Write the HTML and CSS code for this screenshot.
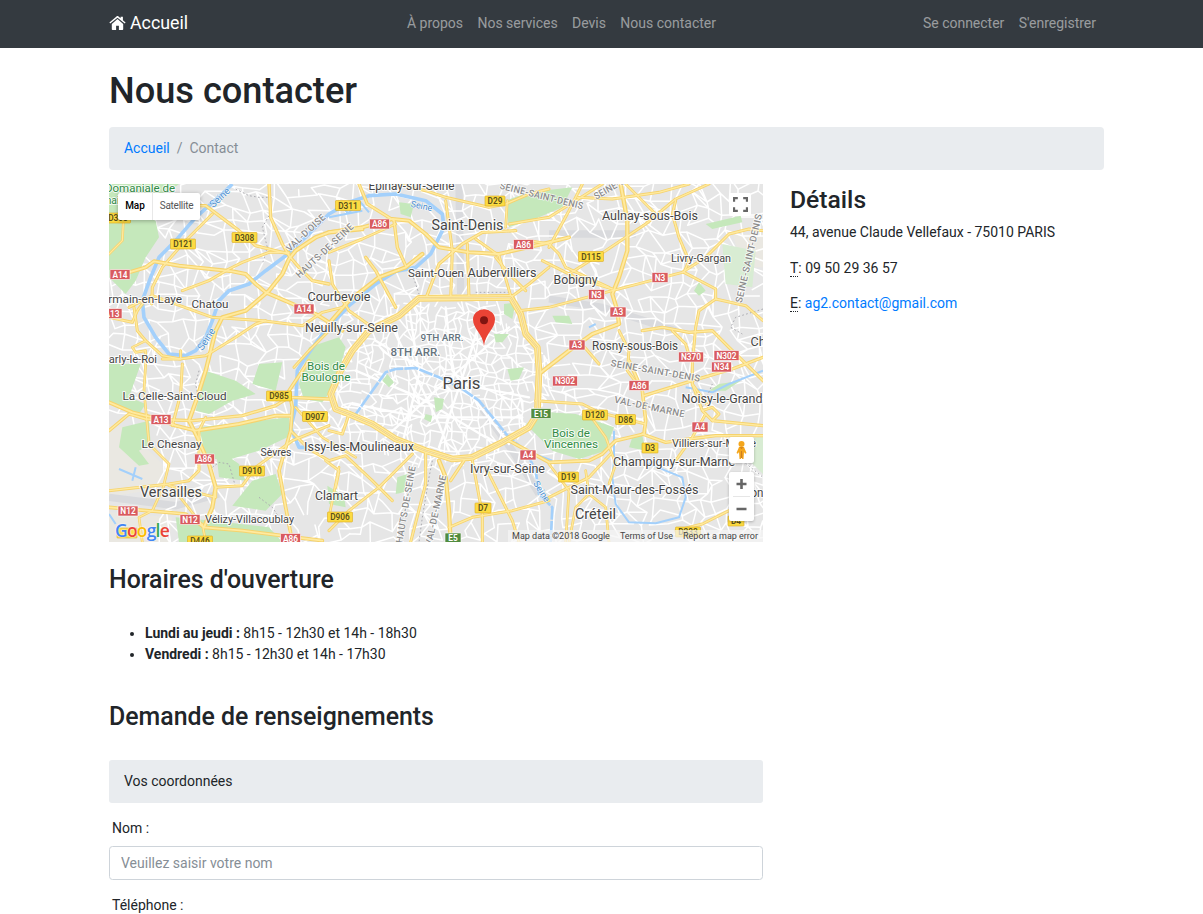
FILE: index.html
```html
<!DOCTYPE html>
<html lang="fr">
<head>
<meta charset="utf-8">
<title>Nous contacter</title>
<link rel="stylesheet" href="styles.css">
</head>
<body>
<nav class="navbar">
  <div class="navbar-inner">
    <a class="brand" href="#"><svg class="home" viewBox="0 0 17 14"><path d="M8.5 3.1 14.2 8v5.2c0 .4-.3.7-.7.7h-3.6V9.8H7.1v4.1H3.5c-.4 0-.7-.3-.7-.7V8z"/><path d="M8.5.1c.4 0 .7.1 1 .4l2.1 1.8V.7h2.3v3.6l2.7 2.3-.8 1L8.5 1.7 1.2 7.6l-.8-1L7.5.5c.3-.3.6-.4 1-.4z"/></svg>Accueil</a>
    <div class="links main-links"><a href="#">À propos</a><a href="#">Nos services</a><a href="#">Devis</a><a href="#">Nous contacter</a></div>
    <div class="links user-links"><a href="#">Se connecter</a><a href="#">S'enregistrer</a></div>
  </div>
</nav>
<div class="container">
  <h1>Nous contacter</h1>
  <div class="breadcrumb"><a href="#">Accueil</a><span class="sep">/</span><span class="current">Contact</span></div>
  <div class="row">
    <main class="content">
      <div class="map">
        <svg class="map-canvas" viewBox="0 0 1962 1074">
          <rect width="1962" height="1074" fill="#e6e6e6"/>
          <g fill="#eae8e2"><path d="M0 720 50 730 160 840 170 910 0 940z"/><path d="M0 985 190 1000 180 1074H0z"/><path d="M1870 150h92v100h-60z"/></g>
          <g fill="none" stroke="#d9dadd" stroke-width="22"><path d="M1050 0 1055 330M1320 150 1580 150M1320 345 1480 370 1700 440M1110 660 1210 800 1290 930M0 940 200 965 330 930"/></g>
          <g id="streets" class="streets"></g>
          <g class="parks">
            <path d="M0 0H210L150 45 30 60 140 110 150 160 110 220 80 290 50 330 0 280z"/>
            <path d="M0 540H95L60 640 110 660 90 690 0 655z"/><path d="M40 730 120 710 125 780 90 800 120 840 90 845 30 790z"/>
            <path d="M270 730 540 700 545 755 450 800 350 830 290 820z"/><path d="M290 560 380 590 440 630 370 650 300 690 260 680z"/>
            <path d="M430 890 500 870 520 930 470 980 370 965z"/><path d="M200 1000 310 1010 480 1030 520 1074H210z"/><path d="M320 790 390 840 410 890 330 880z"/>
            <path d="M450 540 520 535 500 620 430 600z"/><path d="M570 600 600 490 690 460 710 490 680 600 640 655 585 645z"/>
            <path d="M1250 720 1320 685 1400 690 1515 730 1490 800 1410 825 1330 800z"/>
            <path d="M1190 50 1260 25 1390 10 1360 70 1290 100 1200 130z"/><path d="M1790 120 1895 95 1900 115 1810 135z"/>
            <path d="M1570 760 1600 755 1610 800 1560 790zM1770 295 1790 320 1770 335 1755 320z"/>
            <path d="M1185 360 1220 355 1210 405 1185 390zM975 640 1005 645 1000 675 980 685zM1195 555 1245 550 1230 585 1205 590z"/>
            <path d="M870 55 915 60 905 100 875 90zM865 880 895 870 885 925 860 930zM655 905 705 935 710 970 660 960zM1155 450 1200 450 1180 475 1160 475z"/>
            <path d="M1330 395 1380 395 1390 420 1340 415zM1830 600 1895 590 1850 620 1800 620zM820 590 835 570 855 595 840 610zM950 690 970 695 965 715 945 705z"/>
            <path class="pale" d="M1840 180 1940 200 1930 310 1850 300zM1880 790 1962 750V870z"/>
          </g>
          <g class="water">
            <path d="M370 0 340 30 260 100 200 170 150 220 125 280 100 350 105 400 140 460 180 510 230 515 260 500 290 460 310 410 330 350 360 320 420 300 470 260 530 215 600 150 660 90 720 55 780 35 860 30 950 50 1000 90 1005 130 985 170 965 210 920 250 860 262 800 300 720 365 640 450 590 520 565 560 560 670 545 730 570 790 610 790"/>
            <path class="paris" d="M730 705 790 620 830 565 860 555 920 552 990 580 1060 615 1110 650 1200 760 1250 800 1280 860 1290 930 1330 970 1325 1074"/>
            <path class="thin" d="M1515 740 1515 830 1510 880 1520 960 1560 1015 1640 1018 1710 1000 1730 940 1720 880 1670 860 1610 835M1962 560 1860 600 1810 625 1730 610M1250 800 1330 830M660 100 760 80M0 990 20 1020M30 855 100 885M70 890 80 850M700 70 720 90M1440 430 1460 420"/>
            <path class="thin" d="M720 85 755 55 780 85"/>
          </g>
          <g class="borders"><path d="M380 15 420 35 450 40 490 40M480 95 460 130 475 190 460 240M910 270 930 330M1100 325 1200 325M1962 375 1880 400 1865 430 1900 450M270 560 260 600 270 650M310 850 330 835 360 840 380 910M450 940 490 970 510 1000M970 830 960 880 940 1000 930 1074M1780 670 1810 600M1900 830 1962 880"/></g>
          <g id="roads"></g>
          <g class="map-labels" transform="scale(3) translate(-109 -184)" id="labels"></g>
          <g transform="translate(1125 375)"><path d="M0 112C-4 70-33 56-33 23A33 33 0 0 1 33 23C33 56 4 70 0 112z" transform="translate(0 10) scale(1 .9)" fill="#ea4335"/><circle cy="34" r="12" fill="#811411"/></g>
        </svg>
        <div class="map-types"><b>Map</b><span>Satellite</span></div>
        <div class="map-btn full"><svg viewBox="0 0 14 14"><path d="M1 4.5V1h3.5M9.5 1H13v3.5M13 9.5V13H9.5M4.5 13H1V9.5"/></svg></div>
        <div class="map-btn man"><svg viewBox="0 0 12 20"><path fill="#f4a61d" d="M3.5 7h5l2.5 6-1.4.7L8.5 12 8 19H6.5L6 14l-.5 5H4l-.5-7-1.1 1.7L1 13z"/><circle cx="6" cy="4" r="3" fill="#f4a61d"/><path d="M4 7.3h4L6 9zM5.5 11h1l.3 7H5.2z" fill="#ce7d1a"/></svg></div>
        <div class="map-btn zoom"><svg viewBox="0 0 25 49"><path d="M12.5 7v10M7.5 12h10M7.5 37h10" stroke="#666" stroke-width="2.6"/><path d="M4 24.5h17" stroke="#e6e6e6"/></svg></div>
        <div class="google"><span class="b">G</span><span class="r">o</span><span class="y">o</span><span class="b">g</span><span class="g">l</span><span class="r">e</span></div>
        <div class="credits"><span>Map data ©2018 Google</span><span>Terms of Use</span><span>Report a map error</span></div>
      </div>
      <h3 class="hours-title">Horaires d'ouverture</h3>
      <ul>
        <li><strong>Lundi au jeudi :</strong> 8h15 - 12h30 et 14h - 18h30</li>
        <li><strong>Vendredi :</strong> 8h15 - 12h30 et 14h - 17h30</li>
      </ul>
      <h3 class="form-title">Demande de renseignements</h3>
      <form>
        <div class="section">Vos coordonnées</div>
        <label for="nom">Nom :</label>
        <input id="nom" type="text" placeholder="Veuillez saisir votre nom">
        <label class="last">Téléphone :</label>
      </form>
    </main>
    <aside class="details">
      <h3>Détails</h3>
      <p>44, avenue Claude Vellefaux - 75010 PARIS</p>
      <p><abbr title="Téléphone">T</abbr>: 09 50 29 36 57</p>
      <p><abbr title="Email">E</abbr>: <a href="#">ag2.contact@gmail.com</a></p>
    </aside>
  </div>
</div>
<script src="map.js"></script>
</body>
</html>
```
FILE: styles.css
```css
* { box-sizing: border-box; }
body { margin: 0; height: 914px; overflow: hidden; font: 400 14px/21.33px Roboto, sans-serif; letter-spacing: -.01px; color: #212529; background: #fff; }
a { color: #007bff; text-decoration: none; }
.navbar { height: 48px; background: #343a40; }
.navbar-inner { display: flex; align-items: center; width: 995px; height: 47px; margin-left: 109px; }
.brand { display: flex; align-items: center; width: 298px; padding-bottom: 1px; color: #fff; font-size: 17.8px; }
.home { width: 17px; height: 14px; margin-right: 4px; fill: #fff; }
.links { display: flex; gap: 14.4px; }
.links a { color: rgba(255, 255, 255, .5); white-space: nowrap; }
.user-links { margin-left: auto; padding-right: 8px; }
.container { width: 995px; margin-left: 109px; padding-top: 23px; }
h1, h3 { margin: 0; font-weight: 500; line-height: 1.1; }
h1 { font-size: 36.2px; height: 39px; margin-bottom: 17px; }
h3 { font-size: 24.9px; height: 27px; }
.breadcrumb { display: flex; align-items: center; height: 43px; margin-bottom: 14px; padding: 0 15px; background: #e9ecef; border-radius: 4px; }
.sep { padding: 0 7px; color: #868e96; }
.current { color: #868e96; }
.row { display: grid; grid-template-columns: 654px 314px; column-gap: 27px; }
.hours-title { margin-top: 24px; }
ul { margin: 30px 0 37px; padding-left: 36px; }
.section { display: flex; align-items: center; height: 43px; margin: 30px 0 15px; padding: 1px 15px 0; background: #e9ecef; border-radius: 3px; }
label { display: block; margin: 0 0 7px 3px; line-height: 21px; }
.last { margin-bottom: 0; }
input { display: block; width: 100%; height: 34px; margin-bottom: 15px; padding: 0 11px; border: 1px solid #ced4da; border-radius: 3.5px; font: inherit; }
input::placeholder { color: #868e96; opacity: 1; }
.details { padding-top: 2px; }
.details h3 { margin-bottom: 9px; font-size: 24.7px; }
.details p { margin: 0 0 14.2px; }
abbr { text-decoration: none; border-bottom: 1px dotted #212529; display: inline-block; line-height: 15px; }

.map { position: relative; height: 358px; overflow: hidden; background: #e6e6e6; }
.map-canvas { display: block; width: 654px; height: 358px; }
.streets { fill: none; stroke: #fff; stroke-linecap: round; }
.parks { fill: #c5e8bb; }
.parks .pale { fill: #d8ecd3; }
.water { fill: none; stroke: #a3d0fb; stroke-width: 11; stroke-linejoin: round; }
.water .thin { stroke-width: 6; }
.water .paris { stroke-width: 8; stroke-dasharray: 42 4; }
.borders { fill: none; stroke: #aaaab0; stroke-width: 3; stroke-dasharray: 5 7; }
.road-edge, .road-core { fill: none; stroke-linejoin: round; stroke-linecap: round; }
.road-edge { stroke: #f6d36d; }
.road-core { stroke: #ffea9f; }
.map-labels text { font-family: Roboto, sans-serif; text-anchor: middle; paint-order: stroke; stroke: rgba(255, 255, 255, .85); stroke-width: 2px; stroke-linejoin: round; fill: #454545; }
.map-labels .park { fill: #318b45; }
.map-labels .arr { fill: #65737e; font-weight: 500; }
.map-labels .dept { fill: #8b8b8b; font-weight: 500; letter-spacing: .3px; stroke-width: 1.5px; }
.map-labels .river { fill: #4b8fd0; stroke-width: 1px; }
.map-labels .shield { stroke: none; font-size: 8.3px; font-weight: 600; }
.map-types { position: absolute; left: 9px; top: 9px; display: flex; height: 27px; background: #fff; border-radius: 2px; box-shadow: 0 1px 4px rgba(0, 0, 0, .3); font-size: 10px; line-height: 25px; color: #565656; }
.map-types b { width: 35px; text-align: center; color: #000; font-weight: 500; border-right: 1px solid #e8e8e8; }
.map-types span { width: 47px; text-align: center; letter-spacing: -.25px; }
.map-btn { position: absolute; left: 620px; width: 25px; background: #fff; border-radius: 2px; box-shadow: 0 1px 3px rgba(0, 0, 0, .25); display: flex; justify-content: center; align-items: center; }
.full { left: 620px; top: 9px; width: 22px; height: 23px; box-shadow: none; }
.full svg { width: 15px; height: 15px; fill: none; stroke: #666; stroke-width: 2; }
.man { top: 253px; height: 26px; }
.man svg { width: 13px; height: 20px; }
.zoom { top: 288px; height: 49px; }
.zoom svg { width: 25px; height: 49px; }
.google { position: absolute; left: 6px; top: 335px; font: 600 17.5px/22px "Open Sans", sans-serif; letter-spacing: -.8px; text-shadow: 0 0 1px #fff, 0 0 2px #fff; }
.google .b { color: #4285f4; } .google .r { color: #ea4335; } .google .y { color: #fbbc05; } .google .g { color: #34a853; }
.credits { position: absolute; right: 0; bottom: 0; display: flex; gap: 10px; height: 12px; padding: 0 5px 0 4px; background: rgba(245, 245, 245, .7); color: #444; font-size: 9px; line-height: 12px; white-space: nowrap; }
```
FILE: map.js
```js
(function () {
  var ns = 'http://www.w3.org/2000/svg';
  function add(parent, name, attrs, text) {
    var el = document.createElementNS(ns, name);
    for (var k in attrs) el.setAttribute(k, attrs[k]);
    if (text) el.textContent = text;
    parent.appendChild(el);
    return el;
  }

  // Minor streets: an irregular mesh, denser in the city centre
  var seed = 17;
  function rnd() { seed = (seed * 16807) % 2147483647; return seed / 2147483647; }
  function mesh(x0, y0, x1, y1, step, keep, inside) {
    var pts = [], d = '';
    for (var y = y0, r = 0; y <= y1; y += step, r++) {
      pts[r] = [];
      for (var x = x0; x <= x1; x += step) pts[r].push([x + (rnd() - .5) * step * .95, y + (rnd() - .5) * step * .95]);
    }
    function seg(a, b) {
      if (b && inside(a[0], a[1]) && rnd() < keep) d += 'M' + a[0].toFixed(0) + ' ' + a[1].toFixed(0) + 'L' + b[0].toFixed(0) + ' ' + b[1].toFixed(0);
    }
    for (var i = 0; i < pts.length; i++) for (var j = 0; j < pts[i].length; j++) {
      seg(pts[i][j], pts[i][j + 1]);
      if (pts[i + 1]) { seg(pts[i][j], pts[i + 1][j]); if (rnd() < .2) seg(pts[i][j], pts[i + 1][j + 1]); }
    }
    return d;
  }
  function paris(x, y) { return Math.pow((x - 985) / 330, 2) + Math.pow((y - 590) / 245, 2) < 1; }
  function airfield(x, y) { return x < 150 && y > 720; }
  var streets = document.getElementById('streets');
  add(streets, 'path', { d: mesh(0, 0, 1990, 1100, 38, .8, function (x, y) { return !paris(x, y) && !airfield(x, y); }), 'stroke-width': 4.5 });
  add(streets, 'path', { d: mesh(650, 340, 1340, 860, 24, .85, paris), 'stroke-width': 4.5 });
  add(streets, 'path', { d: 'M740 560 930 640 1130 760M800 470 1000 590 1260 640M850 430 990 720 1020 800M1125 370 1080 520 990 790M830 760 980 620 1200 430M730 660 940 700 1240 700M900 370 930 570 880 780M1010 370 1030 560 1200 780', 'stroke-width': 7 });

  // Main roads: width, then the points
  var roads = [
    [12, '60 265 110 250 135 232 210 245 370 262 410 270 440 300 470 325 540 355 620 390 700 440'],
    [10, '480 0 485 100 520 180 540 215 570 250 610 290 660 300'], [10, '270 65 290 65 390 140 440 185 540 210'],
    [9, '310 90 220 180 160 250 130 310 128 360'], [9, '220 320 300 290 360 255 400 235 480 205 540 205'],
    [9, '60 370 130 335 310 400 460 410 580 425 640 385 700 370'],
    [13, '760 135 660 145 620 160 560 200 540 225 520 270 480 320 410 380 340 400 320 440 310 480 290 560 265 640 240 710 265 760 300 840 320 910 310 970 285 1030'],
    [9, '160 525 210 525 290 515 380 460 440 420 470 410'], [9, '0 400 70 415 85 380 100 360'], [9, '75 370 85 440 110 470 160 515 215 525 215 500'],
    [8, '45 80 40 170 0 210'], [9, '660 440 600 500 555 550'], [8, '110 470 70 490 80 505 110 500 110 540 105 620 120 780 180 840 165 900'],
    [12, '660 145 760 130 850 105 900 110 950 150 990 190 1080 205 1170 210 1300 180 1380 160'],
    [20, '1205 340 930 343 870 395 780 440 730 500 695 560 665 630 680 675 720 690 790 720 860 765 950 800 1030 825 1090 820 1180 775 1260 730 1285 690 1290 560 1285 490 1250 450 1235 390 1205 340'],
    [10, '750 0 775 60 855 110 865 190 890 245'], [9, '860 0 950 20 1010 40 1140 70 1190 60 1260 30 1320 15'],
    [9, '1010 50 1030 200 1025 345'], [9, '1075 180 1080 340'], [10, '1220 140 1120 145 1060 180 990 240 950 345'],
    [9, '1100 165 1170 215 1205 335'], [9, '1160 220 1200 270 1250 320'], [9, '660 205 760 165 860 120'], [10, '770 220 800 260 860 370'],
    [13, '650 430 720 350 810 280 890 250 940 210'], [9, '1200 120 1320 100 1400 50 1480 0'], [8, '1195 50 1190 130'],
    [9, '1320 250 1260 300 1205 340'], [9, '1230 380 1320 370 1510 320 1720 265 1790 220 1860 150 1920 135 1962 140'],
    [9, '660 230 670 300 720 380 790 430'],
    [13, '1535 0 1555 110 1555 200 1530 280 1510 330 1525 380 1530 420 1450 450 1380 500 1290 570'],
    [9, '1405 40 1510 45 1650 25 1740 0'], [9, '1420 0 1380 80 1320 190'], [9, '1800 0 1700 45 1610 120 1490 200 1380 270'],
    [8, '1550 0 1640 90'], [9, '1700 50 1690 90 1710 160 1740 230 1725 265'],
    [9, '1260 170 1320 180 1350 210 1370 250 1500 310'], [9, '1300 230 1400 280 1510 315'],
    [9, '1725 265 1820 315 1820 345 1770 380 1760 430 1750 540 1750 600 1800 670'], [9, '1820 345 1910 365 1962 410'],
    [10, '1600 440 1660 430 1740 445 1810 440 1860 490 1962 590'], [9, '1530 440 1560 500 1555 560 1600 620'],
    [9, '1690 440 1730 480 1745 530'], [9, '1410 470 1470 540'],
    [12, '0 655 70 685 150 705 200 725 260 740 390 720 500 695 545 695'], [10, '0 740 60 690 110 705 250 710 400 695 500 665 540 640 660 645'],
    [9, '220 540 215 630 190 725'], [9, '0 920 180 900 240 890 270 860 270 740 290 700'], [9, '320 910 400 905 440 850 550 770 660 725'],
    [9, '180 905 320 940 320 910'], [11, '0 970 230 990 285 1030 400 1040 640 1070'], [8, '190 910 285 1030'],
    [11, '600 530 540 620 550 670 545 740 510 860 530 970 550 1074'], [9, '545 740 600 795 660 830 710 815 790 890 850 950'],
    [8, '165 905 130 980 90 1000 100 1074'], [8, '280 1020 290 1074'], [8, '560 670 640 760 740 820'],
    [9, '950 800 950 900 905 1074'], [13, '990 830 1010 880 1020 980 1025 1074'], [10, '1065 830 1025 890'],
    [9, '1090 830 1120 990 1120 1074'], [9, '1130 850 1210 1010 1230 1074'], [9, '1020 1030 1090 1000 1210 980 1320 950'],
    [9, '910 810 810 910 720 980 660 1040'], [9, '660 740 700 750 720 690'], [11, '1200 770 1320 835 1440 830 1480 810 1520 770 1605 750 1610 710 1600 620 1560 530'],
    [9, '1280 650 1420 660 1470 685 1610 720'], [10, '1605 635 1750 590 1870 555 1962 520'], [10, '1600 750 1670 775 1740 765 1820 755 1962 755'],
    [9, '1750 600 1780 680 1810 710 1830 690 1810 670 1780 680'], [10, '1810 710 1962 725'], [9, '1790 690 1750 760 1700 830'],
    [9, '1505 810 1440 880 1320 940'], [8, '1430 860 1440 930 1490 970 1500 1074'], [8, '1320 840 1380 920 1370 1074'],
    [8, '1440 930 1400 970 1380 1074'], [9, '1700 1040 1780 1020 1860 980 1930 1000'], [8, '1440 690 1490 760 1520 840 1500 900'],
    [8, '690 850 660 1000'], [9, '650 830 690 860 680 910']
  ];
  var layer = document.getElementById('roads');
  ['road-edge', 'road-core'].forEach(function (cls, n) {
    roads.forEach(function (r) { add(layer, 'polyline', { points: r[1], 'class': cls, 'stroke-width': n ? (r[0] > 15 ? 14 : r[0] * .45) : r[0] }); });
  });
  // Median of the ring road
  add(layer, 'polyline', { points: roads[14][1], fill: 'none', stroke: '#f6d36d', 'stroke-width': 6 });
  add(layer, 'polyline', { points: roads[14][1], fill: 'none', stroke: '#eeeae0', 'stroke-width': 2 });

  var labels = document.getElementById('labels');
  // text, centre x, baseline, drawn width, size, class, rotation
  [
    ['Domaniale de', 140, 192, 70, 11.5, 'park'], ['rmain', 112, 204, 26, 11.5, 'park'], ['Epinay-sur-Seine', 411.5, 190, 86, 12],
    ['Saint-Denis', 467.5, 230, 72, 14], ['Aulnay-sous-Bois', 650, 220, 96, 12.5], ['Livry-Gargan', 701, 262, 60, 11],
    ['Bobigny', 575.5, 284, 44, 12.5], ['Saint-Ouen', 436, 277, 56, 11.5], ['Aubervilliers', 502, 277, 69, 12.5],
    ['Courbevoie', 339, 300.5, 63, 12.5], ['Neuilly-sur-Seine', 351.5, 331.5, 93, 12.5], ['Chatou', 210, 308, 37, 11.5],
    ['Germain-en-Laye', 138, 302.5, 88, 11.5], ['Marly-le-Roi', 128, 363, 58, 10.5], ['Rosny-sous-Bois', 635, 349.5, 86, 12],
    ['Chelles', 771, 346, 41, 12.5], ['9TH ARR.', 442, 341, 43, 9.5, 'arr'], ['8TH ARR.', 415.5, 356, 50, 11, 'arr'],
    ['Paris', 461.5, 388.5, 38, 17], ['Bois de', 326, 370, 38, 11, 'park'], ['Boulogne', 326, 381, 49, 11, 'park'],
    ['La Celle-Saint-Cloud', 174.5, 400, 104, 11.5], ['Le Chesnay', 171.5, 448, 60, 11.5], ['Versailles', 171, 496.5, 62, 14],
    ['Vélizy-Villacoublay', 249.5, 522.5, 89, 11], ['Sèvres', 276, 456, 31, 10.5], ['Issy-les-Moulineaux', 359, 451, 110, 12.5],
    ['Clamart', 336.5, 500, 43, 12.5], ['Ivry-sur-Seine', 507.5, 473, 75, 12.5], ['Bois de', 571, 437, 38, 11, 'park'],
    ['Vincennes', 571, 448, 54, 11, 'park'], ['Noisy-le-Grand', 722, 403, 81, 12.5], ['Villiers-sur-Marne', 714, 447, 84, 10.5],
    ['Champigny-sur-Marne', 674, 466, 122, 12.5], ['Saint-Maur-des-Fossés', 634.5, 493.5, 128, 12.5], ['Créteil', 595.5, 519, 41, 14], ['on', 757, 497, 13, 12],
    ['VAL-D\'OISE', 308, 235, 50, 9.5, 'dept', -43], ['HAUTS-DE-SEINE', 327, 253, 75, 9.5, 'dept', -43],
    ['SEINE-SAINT-DENIS', 541, 199, 86, 9.5, 'dept', 14], ['SEINE-SAINT', 620, 186, 55, 9.5, 'dept', -30],
    ['SEINE-SAINT-DENIS', 752, 259, 91, 9.5, 'dept', -77], ['SEINE-SAINT-DENIS', 655, 374, 91, 9.5, 'dept', 10],
    ['VAL-DE-MARNE', 649, 410, 72, 9.5, 'dept', 12], ['HAUTS-DE-SEINE', 409, 505, 78, 9.5, 'dept', -80],
    ['VAL-DE-MARNE', 439, 511, 72, 9.5, 'dept', -78], ['Seine', 222, 200, 24, 10, 'river', -43],
    ['Seine', 421, 209, 22, 9, 'river', 12], ['Seine', 209, 341, 24, 10, 'river', -57], ['Seine', 539, 493, 23, 9, 'river', 58]
  ].forEach(function (l) {
    var a = { x: l[1], y: l[2], textLength: l[3], lengthAdjust: 'spacingAndGlyphs', 'font-size': l[4], 'class': l[5] || 'town' };
    if (l[6]) a.transform = 'rotate(' + l[6] + ' ' + l[1] + ' ' + l[2] + ')';
    add(labels, 'text', a, l[0]);
  });

  // Road number shields: text, centre x, centre y
  [
    ['D308', 118, 218], ['D311', 348, 205.5], ['D121', 183, 244], ['D308', 244.5, 237.5], ['A14', 120, 274.5], ['A13', 112, 313.5],
    ['A86', 379.5, 224], ['D29', 495, 201], ['A86', 523.5, 244.5], ['A14', 304, 309], ['D115', 591, 256.5], ['N3', 660, 277.5],
    ['N3', 596.5, 294.5], ['A3', 618, 312], ['A3', 577, 345], ['N34', 721.5, 367], ['N370', 691, 357], ['N302', 726.5, 355.5],
    ['N302', 565, 381], ['A86', 639, 385.5], ['D985', 279, 396], ['D907', 315, 416.5], ['A13', 161, 419.5], ['E15', 541, 413.5],
    ['D120', 595, 415], ['D86', 625.5, 419.5], ['A4', 700, 427], ['D3', 650, 448], ['A86', 204.5, 459], ['D910', 252, 471],
    ['A4', 528, 455], ['D19', 568.5, 477], ['D7', 483, 508], ['N12', 128, 511], ['N12', 190, 519.5], ['D906', 340, 517],
    ['A86', 290.5, 538.5], ['D446', 200, 541], ['E5', 453, 538], ['D4', 736, 521], ['D233', 688, 532], ['', 127, 533]
  ].forEach(function (s) {
    var w = [20, 0, 16, 20, 25][s[0].length], c = s[0][0] || 'D', yellow = c === 'D';
    add(labels, 'rect', { x: s[1] - w / 2, y: s[2] - 5, width: w, height: 10, rx: .7, fill: yellow ? '#fcdb42' : c === 'E' ? '#528c3e' : '#d95b5f', stroke: yellow ? '#dbab20' : '#fff', 'stroke-width': .6 });
    add(labels, 'text', { x: s[1], y: s[2] + 3, 'class': 'shield', style: 'fill:' + (yellow ? '#59501c' : '#fff') }, s[0]);
  });
})();
```
